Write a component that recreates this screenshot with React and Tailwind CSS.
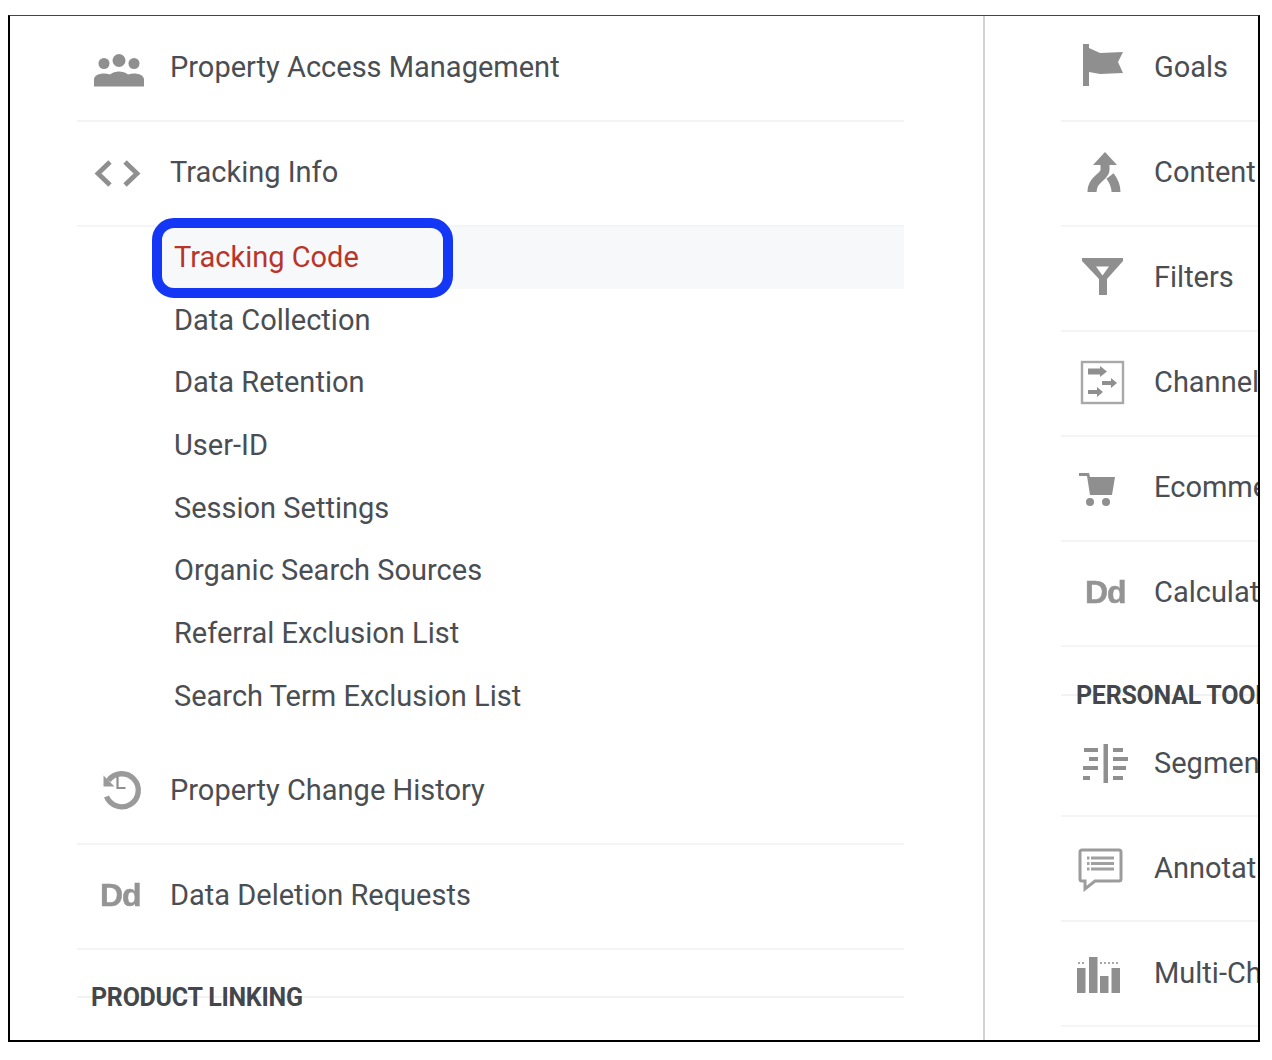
import React from "react";

const Svg = ({ children }) => (
  <svg viewBox="0 0 60 60" className="w-[60px] h-[60px] shrink-0 blur-[0.6px]" fill="#8f8f8f">
    {children}
  </svg>
);

const People = () => (
  <Svg>
    <circle cx="14" cy="25.500" r="5.500" />
    <circle cx="29" cy="22.500" r="6.500" />
    <circle cx="44" cy="25.500" r="5.500" />
    <path d="M4 48.500v-7c0-4 5-6 10-6 2 0 4 .3 6 1 2-2 6-3 9-3s7 1 9 3c2-.7 4-1 6-1 5 0 10 2 10 6v7z" />
  </Svg>
);

const Code = () => (
  <Svg>
    <path d="M20 19 8 30.500 20 42M35 19l12 11.500L35 42" fill="none" stroke="#8f8f8f" strokeWidth="4.800" />
  </Svg>
);

const History = () => (
  <Svg>
    <path d="M18.500 19.500A16.500 16.500 0 1 1 16.500 35.500" fill="none" stroke="#9a9a9a" strokeWidth="5.400" />
    <path d="M13.500 14.500v11h11z" fill="#9a9a9a" />
    <path d="M27.500 15.500v11.500h8" fill="none" stroke="#8f8f8f" strokeWidth="2.200" />
  </Svg>
);

const Flag = () => (
  <Svg>
    <path d="M8 6h6v42H8z" />
    <path d="M14 10l11 5 23-1-5 10 5 11-23 1-11-2z" />
  </Svg>
);

const Merge = () => (
  <Svg>
    <path d="M30 9l12 13H18z" />
    <path d="M30 18v9c0 7-13 9-13 22M35 33c3 4 6 9 6 16" fill="none" stroke="#8f8f8f" strokeWidth="9" />
  </Svg>
);

const Funnel = () => (
  <Svg>
    <path fillRule="evenodd" d="M7 10h41v3L32 31v16h-8V31L7 13zM21 18.500l6.500 9 6.500-9z" />
  </Svg>
);

const Channel = () => (
  <Svg>
    <rect x="7" y="9" width="41" height="41" fill="none" stroke="#a8a8a8" strokeWidth="2.400" />
    <path d="M13 15.500h12V13l7 5.500-7 5.500v-2.500H13z" />
    <path d="M27 28h9v-3l6 5-6 5v-3h-9z" />
    <path d="M13 37h9v-3l6 5-6 5v-3h-9z" />
  </Svg>
);

const Cart = () => (
  <Svg>
    <path d="M4 15h10l1 4h25l-3 18H15l-3-19H4z" />
    <circle cx="15" cy="44" r="4" />
    <circle cx="31" cy="44" r="4" />
  </Svg>
);

const Segments = () => (
  <Svg>
    <path d="M28.500 10h4.500v39h-4.500z" />
    <path d="M9 14h14v4H9zM14 23h9v4h-9zM8 32h15v4H8zM8 42h7v4H8z" />
    <path d="M38 14h10v4H38zM38 23h15v4H38zM38 32h13v4H38zM38 42h10v4H38z" />
  </Svg>
);

const Note = () => (
  <Svg>
    <path d="M7 11h37a2 2 0 0 1 2 2v27a2 2 0 0 1-2 2H20l-10 8v-8H7a2 2 0 0 1-2-2V13a2 2 0 0 1 2-2z" fill="none" stroke="#9c9c9c" strokeWidth="3" />
    <path d="M12 17.500h2.500v3H12zM16 17.500h23v3H16zM12 23h2.500v3H12zM16 23h23v3H16zM12 28.500h2.500v3H12zM16 28.500h23v3H16z" fill="#a0a0a0" />
  </Svg>
);

const Bars = () => (
  <Svg>
    <path d="M2 24h8.500v25H2zM14 13h8.500v36H14zM25 32h8.500v17H25zM36.500 24H45v25h-8.500z" />
    <path d="M3 18h2v2H3zM7 18h2v2H7zM25 18h2v2h-2zM29 18h2v2h-2zM33 18h2v2h-2zM37 18h2v2h-2zM41 18h2v2h-2z" fill="#a8a8a8" />
  </Svg>
);

const Dd = () => (
  <span className="w-[60px] shrink-0 mb-0.5 pl-[10px] font-['Liberation_Sans',sans-serif] font-bold text-[32px] tracking-[-1px] leading-none text-[#949494] [-webkit-text-stroke:0.5px_#949494] blur-[0.6px]">
    Dd
  </span>
);

// the upper rows sit 1px above the row's middle, the lower right ones do not
const Row = ({ icon, label, pad = "pl-[13px] gap-5", flat = false }) => (
  <div className={`h-[105px] flex items-center ${pad} ${flat ? "" : "pb-0.5"} border-b-2 border-[#f3f4f5] whitespace-nowrap`}>
    {icon}
    <span>{label}</span>
  </div>
);

const Heading = ({ label, pad, line }) => (
  <div className={`grid items-center ${line}`}>
    <div className="[grid-area:1/1] h-0.5 bg-[#f1f2f3]" />
    <div className={`[grid-area:1/1] ${pad} translate-y-px font-bold text-[25px] leading-8 tracking-[-0.25px] text-[#43474b] whitespace-nowrap`}>{label}</div>
  </div>
);

const subItems = [
  "Data Collection",
  "Data Retention",
  "User-ID",
  "Session Settings",
  "Organic Search Sources",
  "Referral Exclusion List",
  "Search Term Exclusion List",
];

const right = "pl-[14px] gap-[19px]";

export default function App() {
  return (
    <div className="pt-[15px] pl-2 w-[1260px] bg-white">
      <div className="h-[1027px] flex overflow-hidden border-t border-t-[#444] border-l-2 border-r-2 border-b-2 border-l-black border-r-black border-b-black font-['Roboto',sans-serif] text-[29px] text-[#4a4e52]">
        <div className="w-[973px] shrink-0 pt-px pl-[67px] pr-[79px]">
          <Row icon={<People />} label="Property Access Management" />
          <Row icon={<Code />} label="Tracking Info" />
          <div className="relative h-[62px] ml-[78px] pl-[19px] flex items-center bg-[#f7f8fa] text-[#b8352b]">
            Tracking Code
            <div className="absolute left-[-3px] top-[-9px] w-[301px] h-[80px] rounded-[22px] border-[10px] border-[#1437f5]" />
          </div>
          {subItems.map((item) => (
            <div key={item} className="h-[62.700px] pl-[97px] flex items-center whitespace-nowrap">
              {item}
            </div>
          ))}
          <div className="mt-[12.300px]">
            <Row icon={<History />} label="Property Change History" />
            <Row icon={<Dd />} label="Data Deletion Requests" />
          </div>
          <Heading label="PRODUCT LINKING" pad="pl-[14px]" line="pt-[31px]" />
        </div>
        <div className="w-0.5 shrink-0 bg-[#d2d2d2]" />
        <div className="flex-1 min-w-0 pt-px pl-[76px]">
          <Row icon={<Flag />} label="Goals" pad={right} />
          <Row icon={<Merge />} label="Content Grouping" pad={right} />
          <Row icon={<Funnel />} label="Filters" pad={right} />
          <Row icon={<Channel />} label="Channel Settings" pad={right} />
          <Row icon={<Cart />} label="Ecommerce Settings" pad={right} />
          <Row icon={<Dd />} label="Calculated Metrics" pad={right} />
          <div className="mb-px">
            <Heading label="PERSONAL TOOLS & ASSETS" pad="pl-[15px]" line="pt-[32px]" />
          </div>
          <Row icon={<Segments />} label="Segments" pad={right} flat />
          <Row icon={<Note />} label="Annotations" pad={right} flat />
          <Row icon={<Bars />} label="Multi-Channel Settings" pad={right} flat />
        </div>
      </div>
    </div>
  );
}
